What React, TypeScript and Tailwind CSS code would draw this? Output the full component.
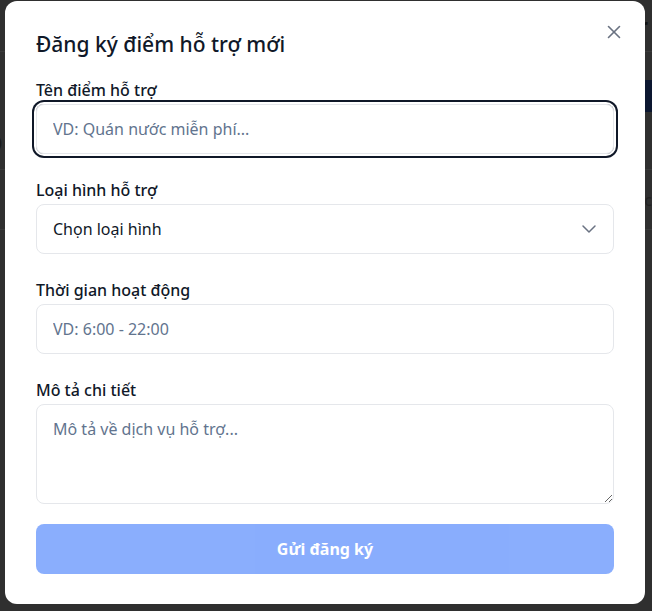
import React from 'react';
import { X, ChevronDown } from 'lucide-react';

const Field = ({ label, children }: { label: string; children: React.ReactNode }) => (
  <div>
    <label className="block text-base leading-6 font-medium text-gray-900 mb-0.5">{label}</label>
    {children}
  </div>
);

const App = () => {
  const [name, setName] = React.useState('');
  const [type, setType] = React.useState('');
  const [hours, setHours] = React.useState('');
  const [desc, setDesc] = React.useState('');

  return (
    <div className="relative min-h-screen bg-[#2f2f2f] overflow-hidden font-['Noto_Sans','Open_Sans',sans-serif]">
      {/* page behind the overlay */}
      <div className="absolute inset-0 pointer-events-none">
        <div className="h-[52px] border-b border-[#3a3a3a] flex justify-end items-center pr-1 text-[#111] text-xl font-bold">Ar</div>
        <div className="h-[28px]" />
        <div className="h-[32px] flex justify-end">
          <div className="w-[40px] bg-[#0c1730]" />
        </div>
        <div className="h-[58px] border-b border-[#3a3a3a] flex items-center text-[#1a1a1a] text-3xl font-bold -ml-4">ỗ</div>
        <div className="h-[60px] border-b border-[#3a3a3a] flex justify-end items-center text-[#222]">c</div>
      </div>

      <div className="relative pt-px pl-[5px]">
        <div className="relative w-[640px] bg-white rounded-xl px-[31px] pt-[29px] pb-[30px]">
          <button
            onClick={() => {}}
            className="absolute top-5 right-5 text-gray-500 hover:text-gray-700"
          >
            <X size={22} strokeWidth={1.75} />
          </button>

          <h2 className="text-[21px] leading-7 font-medium text-gray-900 mb-5">Đăng ký điểm hỗ trợ mới</h2>

          <div className="space-y-6">
            <Field label="Tên điểm hỗ trợ">
              <input
                value={name}
                onChange={(e) => setName(e.target.value)}
                placeholder="VD: Quán nước miễn phí..."
                className="w-full h-[50px] px-4 text-base text-gray-900 placeholder:text-slate-500 border border-gray-200 rounded-lg outline-none ring-2 ring-gray-900 ring-offset-2"
              />
            </Field>

            <Field label="Loại hình hỗ trợ">
              <div className="relative">
                <select
                  value={type}
                  onChange={(e) => setType(e.target.value)}
                  className="w-full h-[50px] px-4 text-base text-gray-900 bg-white border border-gray-200 rounded-lg outline-none appearance-none"
                >
                  <option value="">Chọn loại hình</option>
                  <option value="water">Nước uống</option>
                  <option value="food">Đồ ăn</option>
                  <option value="repair">Sửa xe</option>
                </select>
                <ChevronDown size={24} strokeWidth={1.5} className="absolute right-[13px] top-1/2 -translate-y-1/2 text-gray-500 pointer-events-none" />
              </div>
            </Field>

            <Field label="Thời gian hoạt động">
              <input
                value={hours}
                onChange={(e) => setHours(e.target.value)}
                placeholder="VD: 6:00 - 22:00"
                className="w-full h-[50px] px-4 text-base text-gray-900 placeholder:text-slate-500 border border-gray-200 rounded-lg outline-none"
              />
            </Field>

            <Field label="Mô tả chi tiết">
              <textarea
                value={desc}
                onChange={(e) => setDesc(e.target.value)}
                placeholder="Mô tả về dịch vụ hỗ trợ..."
                rows={3}
                className="block w-full h-[100px] px-4 py-3 text-base text-gray-900 placeholder:text-slate-500 border border-gray-200 rounded-lg outline-none"
              />
            </Field>
          </div>

          <button
            disabled
            className="mt-5 w-full h-[50px] rounded-lg bg-blue-600 text-white font-bold text-base opacity-50"
          >
            Gửi đăng ký
          </button>
        </div>
      </div>
    </div>
  );
};

export default App;
